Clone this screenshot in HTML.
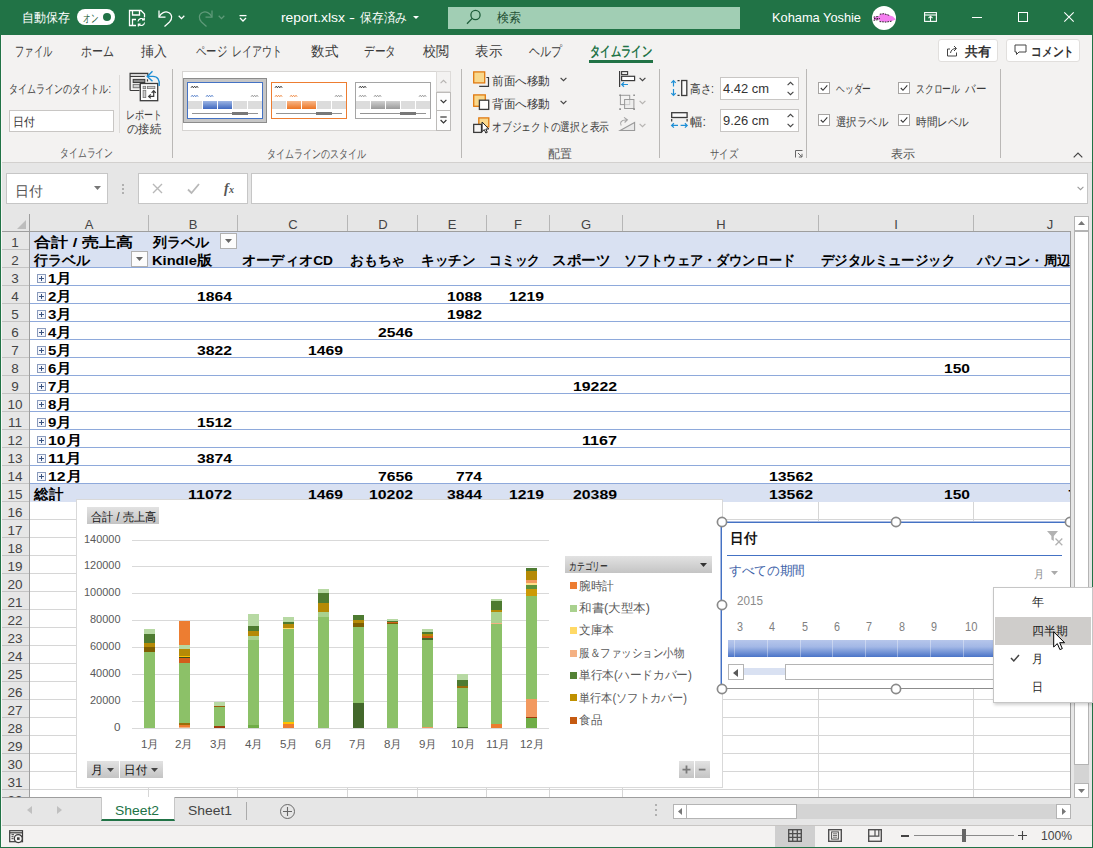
<!DOCTYPE html>
<html lang="ja">
<head>
<meta charset="utf-8">
<title>report.xlsx - Excel</title>
<style>
*{box-sizing:border-box;margin:0;padding:0}
html,body{width:1093px;height:848px;overflow:hidden;background:#e6e6e6}
body{position:relative;font-family:"Liberation Sans",sans-serif;font-size:12px;color:#333}
.a{position:absolute;white-space:nowrap}
svg{position:absolute;overflow:visible}
svg text{font-family:"Liberation Sans",sans-serif;white-space:pre}
#titlebar{left:0;top:0;width:1093px;height:35px;background:#217346}
#tabs{left:0;top:35px;width:1093px;height:31px;background:#f3f2f1}
#ribbon{left:0;top:66px;width:1093px;height:97px;background:#f3f2f1;border-bottom:1px solid #d2d0ce}
#fbar{left:0;top:163px;width:1093px;height:51px;background:#e6e6e6}
#frame-l{left:0;top:0;width:1px;height:848px;background:#217346}
#frame-l2{left:1px;top:35px;width:1px;height:812px;background:#f7f7f6}
#frame-r{left:1092px;top:0;width:1px;height:848px;background:#217346}
#frame-b{left:0;top:847px;width:1093px;height:1px;background:#217346}
</style>
</head>
<body>
<!-- ===== Title bar ===== -->
<div id="titlebar" class="a">
<svg class="tx" style="left:22px;top:7px" width="48" height="21"><text x="0" y="15" font-size="13" fill="#fff" textLength="48" lengthAdjust="spacingAndGlyphs">自動保存</text></svg>
<div class="a" style="left:77px;top:9px;width:38px;height:16px;background:#fff;border-radius:8px"></div>
<svg class="tx" style="left:83px;top:8.5px" width="15" height="18"><text x="0" y="13.0" font-size="11" fill="#1b5e38" textLength="15" lengthAdjust="spacingAndGlyphs">オン</text></svg>
<div class="a" style="left:103px;top:13px;width:8px;height:8px;background:#217346;border-radius:4px"></div>
<svg style="left:128px;top:9px" width="18" height="18" viewBox="0 0 18 18" fill="none" stroke="#fff" stroke-width="1.3"><path d="M8 16.5H1.5V1.5H13L16.5 5V8"/><path d="M4.5 1.5V6H11.5V1.5"/><path d="M4.5 16.5V10.5H8"/><path d="M10 12.5a3.4 3.4 0 0 1 6-1.8M16.3 8.6v2.3h-2.3M16.6 13.5a3.4 3.4 0 0 1-6 1.8M10.3 17.4v-2.3h2.3" stroke-width="1.1"/></svg>
<svg style="left:157px;top:8px" width="18" height="20" viewBox="0 0 18 20" fill="none" stroke="#fff" stroke-width="1.25"><path d="M2 2.5V9H8.5"/><path d="M2.2 8.8C4 5 8 3 11.5 4.5C15.5 6.3 15.5 11 12.5 14L7.5 18.5"/></svg>
<svg style="left:178px;top:15px" width="7" height="5" viewBox="0 0 7 5" fill="none" stroke="#fff" stroke-width="1.3"><path d="M.7.8L3.5 3.6L6.3.8"/></svg>
<svg style="left:196px;top:8px" width="18" height="20" viewBox="0 0 18 20" fill="none" stroke="#5f9a79" stroke-width="1.25"><path d="M16 2.5V9H9.5"/><path d="M15.8 8.8C14 5 10 3 6.5 4.5C2.5 6.3 2.5 11 5.5 14L10.5 18.5"/></svg>
<svg style="left:218px;top:15px" width="7" height="5" viewBox="0 0 7 5" fill="none" stroke="#5f9a79" stroke-width="1.3"><path d="M.7.8L3.5 3.6L6.3.8"/></svg>
<svg style="left:239px;top:13px" width="8" height="9" viewBox="0 0 8 9" fill="none" stroke="#fff" stroke-width="1.3"><path d="M.5 2.6H7.5"/><path d="M1 5L4 8L7 5"/></svg>
<svg class="tx" style="left:281px;top:7px" width="64" height="21"><text x="0" y="15" font-size="13" fill="#fff" textLength="64" lengthAdjust="spacingAndGlyphs">report.xlsx</text></svg>
<svg class="tx" style="left:349px;top:7px" width="6" height="21"><text x="0" y="15" font-size="13" fill="#fff" textLength="6" lengthAdjust="spacingAndGlyphs">-</text></svg>
<svg class="tx" style="left:360px;top:7px" width="47" height="21"><text x="0" y="15" font-size="13" fill="#fff" textLength="47" lengthAdjust="spacingAndGlyphs">保存済み</text></svg>
<svg style="left:413px;top:16px" width="6" height="3" viewBox="0 0 6 3" ><path d="M0 0H6L3 3Z" fill="#fff"/></svg>
<div class="a" style="left:448px;top:7px;width:292px;height:22px;background:#a1ceb4"></div>
<svg style="left:466px;top:9px" width="16" height="16" viewBox="0 0 16 16" fill="none" stroke="#1e5c3a" stroke-width="1.3"><circle cx="9.5" cy="6" r="4.6"/><path d="M6.2 9.4L1 14.8"/></svg>
<svg class="tx" style="left:497px;top:7px" width="24" height="21"><text x="0" y="15" font-size="13" fill="#1e4e33" textLength="24" lengthAdjust="spacingAndGlyphs">検索</text></svg>
<svg class="tx" style="left:772px;top:7px" width="89" height="21"><text x="0" y="15" font-size="13" fill="#fff" textLength="89" lengthAdjust="spacingAndGlyphs">Kohama Yoshie</text></svg>
<div class="a" style="left:872px;top:6px;width:24px;height:24px;background:#fff;border-radius:12px"></div>
<svg style="left:872px;top:6px" width="24" height="24" viewBox="0 0 24 24" ><path d="M1.8 11L7 10.2L8 8L12 7.6L18 9.5L21 10.5L23.8 13.4L20 15L14 16L7.5 15.5L7 13.5L1.8 14.2Z" fill="#f57ff0"/><path d="M1.6 11.1L7 10.3M7.8 8.2L12 7.7L18 9.6M1.6 14.3L7 13.6M7.6 15.6L14 16.1L20 15.1M2 12.6H8" fill="none" stroke="#111" stroke-width=".9" stroke-dasharray="1.6 1"/></svg>
<svg style="left:924px;top:12px" width="13" height="10" viewBox="0 0 13 10" fill="none" stroke="#fff" stroke-width="1.1"><rect x=".6" y=".6" width="11.8" height="8.8"/><path d="M.6 3H12.4"/><path d="M6.5 9.4V4.3M4.5 6.2L6.5 4.2L8.5 6.2"/></svg>
<div class="a" style="left:972px;top:17px;width:10px;height:1px;background:#fff"></div>
<div class="a" style="left:1018px;top:12px;width:10px;height:10px;border:1px solid #fff"></div>
<svg style="left:1064px;top:12px" width="10" height="10" viewBox="0 0 10 10" stroke="#fff" stroke-width="1.1"><path d="M.3.3L9.7 9.7M9.7.3L.3 9.7"/></svg>
</div>
<!-- ===== Tabs ===== -->
<div id="tabs" class="a">
<svg class="tx" style="left:15px;top:5.5px" width="37" height="22"><text x="0" y="15.0" font-size="13.5" fill="#3b3b3b" textLength="37" lengthAdjust="spacingAndGlyphs">ファイル</text></svg>
<svg class="tx" style="left:81px;top:5.5px" width="33" height="22"><text x="0" y="15.0" font-size="13.5" fill="#3b3b3b" textLength="33" lengthAdjust="spacingAndGlyphs">ホーム</text></svg>
<svg class="tx" style="left:141px;top:5.5px" width="26" height="22"><text x="0" y="15.0" font-size="13.5" fill="#3b3b3b" textLength="26" lengthAdjust="spacingAndGlyphs">挿入</text></svg>
<svg class="tx" style="left:196px;top:5.5px" width="31" height="22"><text x="0" y="15.0" font-size="13.5" fill="#3b3b3b" textLength="31" lengthAdjust="spacingAndGlyphs">ページ</text></svg>
<svg class="tx" style="left:232px;top:5.5px" width="50" height="22"><text x="0" y="15.0" font-size="13.5" fill="#3b3b3b" textLength="50" lengthAdjust="spacingAndGlyphs">レイアウト</text></svg>
<svg class="tx" style="left:311px;top:5.5px" width="27" height="22"><text x="0" y="15.0" font-size="13.5" fill="#3b3b3b" textLength="27" lengthAdjust="spacingAndGlyphs">数式</text></svg>
<svg class="tx" style="left:364px;top:5.5px" width="32" height="22"><text x="0" y="15.0" font-size="13.5" fill="#3b3b3b" textLength="32" lengthAdjust="spacingAndGlyphs">データ</text></svg>
<svg class="tx" style="left:423px;top:5.5px" width="26" height="22"><text x="0" y="15.0" font-size="13.5" fill="#3b3b3b" textLength="26" lengthAdjust="spacingAndGlyphs">校閲</text></svg>
<svg class="tx" style="left:475px;top:5.5px" width="27" height="22"><text x="0" y="15.0" font-size="13.5" fill="#3b3b3b" textLength="27" lengthAdjust="spacingAndGlyphs">表示</text></svg>
<svg class="tx" style="left:529px;top:5.5px" width="33" height="22"><text x="0" y="15.0" font-size="13.5" fill="#3b3b3b" textLength="33" lengthAdjust="spacingAndGlyphs">ヘルプ</text></svg>
<svg class="tx" style="left:590px;top:5.5px" width="62" height="22"><text x="0" y="15.0" font-size="13.5" fill="#217346" font-weight="bold" textLength="62" lengthAdjust="spacingAndGlyphs">タイムライン</text></svg>
<div class="a" style="left:589px;top:25px;width:64px;height:3px;background:#217346"></div>
<div class="a" style="left:938px;top:4px;width:60px;height:23px;background:#fff;border:1px solid #e1dfdd;border-radius:3px"></div>
<svg style="left:946px;top:9px" width="13" height="13" viewBox="0 0 13 13" fill="none" stroke="#444" stroke-width="1"><path d="M4 5H1.5V12H10.5V8.5"/><path d="M4.5 9C5 6 7 4.5 10 4.5M8 2L10.5 4.5L8 7"/></svg>
<svg class="tx" style="left:965px;top:5.5px" width="26" height="21"><text x="0" y="15.0" font-size="13" fill="#333" font-weight="bold" textLength="26" lengthAdjust="spacingAndGlyphs">共有</text></svg>
<div class="a" style="left:1006px;top:4px;width:74px;height:23px;background:#fff;border:1px solid #e1dfdd;border-radius:3px"></div>
<svg style="left:1014px;top:9px" width="13" height="12" viewBox="0 0 13 12" fill="none" stroke="#444" stroke-width="1"><path d="M1 1H12V8H5L2.5 10.5V8H1Z"/></svg>
<svg class="tx" style="left:1031px;top:5.5px" width="43" height="21"><text x="0" y="15.0" font-size="13" fill="#333" font-weight="bold" textLength="43" lengthAdjust="spacingAndGlyphs">コメント</text></svg>
</div>
<!-- ===== Ribbon ===== -->
<div id="ribbon" class="a">
<svg class="tx" style="left:9px;top:13px" width="102" height="20"><text x="0" y="14" font-size="12" fill="#3b3b3b" textLength="102" lengthAdjust="spacingAndGlyphs">タイムラインのタイトル:</text></svg>
<div class="a" style="left:9px;top:44px;width:105px;height:22px;background:#fff;border:1px solid #c8c6c4"></div>
<svg class="tx" style="left:13px;top:46px" width="22" height="20"><text x="0" y="14" font-size="12" fill="#333" textLength="22" lengthAdjust="spacingAndGlyphs">日付</text></svg>
<div class="a" style="left:119px;top:9px;width:1px;height:58px;background:#dcdad8"></div>
<svg style="left:129px;top:4px" width="32" height="32" viewBox="0 0 32 32" ><rect x="1.7" y="3.9" width="16.5" height="2.2" fill="#d6d6d6"/><path d="M1.1 20.5V3.3H18.8V6M18.5 9.2V11.6M1.1 20.5H10.5M1.1 6.5H15.8" fill="none" stroke="#3b3b3b" stroke-width="1.2"/><rect x="4.2" y="9.4" width="11.6" height="3.1" fill="#8c8c8c" stroke="#3b3b3b"/><rect x="4.2" y="14.4" width="6.5" height="3.3" fill="#d0d0d0" stroke="#777"/><rect x="11.3" y="13.5" width="17.4" height="17.2" fill="#fff" stroke="#3b3b3b" stroke-width="1.3"/><rect x="14.1" y="16.3" width="2.6" height="2.3" fill="#ccc" stroke="#777" stroke-width=".8"/><rect x="18.4" y="16.3" width="7.5" height="2.3" fill="#ccc" stroke="#777" stroke-width=".8"/><rect x="14.1" y="20.3" width="2.7" height="7.3" fill="#ccc" stroke="#777" stroke-width=".8"/><path d="M19.8 26.4H24.7V20.8M21.8 24.4L19.6 26.4L21.8 28.4M22.6 22.8L24.7 20.6L26.8 22.8" fill="none" stroke="#3b3b3b" stroke-width="1.2"/><path d="M23.5 1.2L18.3 6.4L23.5 11.3M18.5 6.4H24C28.5 6.4 31 10 30.2 16" fill="none" stroke="#1e8fd6" stroke-width="1.4"/></svg>
<svg class="tx" style="left:126px;top:39px" width="36" height="20"><text x="0" y="14" font-size="12" fill="#3b3b3b" textLength="36" lengthAdjust="spacingAndGlyphs">レポート</text></svg>
<svg class="tx" style="left:127px;top:53px" width="34" height="20"><text x="0" y="14" font-size="12" fill="#3b3b3b" textLength="34" lengthAdjust="spacingAndGlyphs">の接続</text></svg>
<svg class="tx" style="left:60px;top:77px" width="53" height="20"><text x="0" y="14" font-size="12" fill="#555" textLength="53" lengthAdjust="spacingAndGlyphs">タイムライン</text></svg>
<div class="a" style="left:172px;top:3px;width:1px;height:89px;background:#bab8b6"></div>
<div class="a" style="left:182px;top:5px;width:269px;height:60px;background:#fff;border:1px solid #d6d4d2"></div>
<div class="a" style="left:183px;top:12px;width:84px;height:45px;background:#c6c6c6;border:1px solid #8c8c8c"></div><div class="a" style="left:187px;top:16px;width:76px;height:37px;background:#fff;border:1px solid #4472c4"></div><svg style="left:187px;top:16px" width="76" height="37" viewBox="0 0 76 37" ><path d="M0 1.8L1.2 .2L2.4 1.8L3.6 .2L4.8 1.8L6 .2L7.2 1.8" transform="translate(4,4)" stroke="#111" fill="none" stroke-width=".8"/><path d="M0 1.8L1.2 .2L2.4 1.8L3.6 .2L4.8 1.8L6 .2L7.2 1.8" transform="translate(4,13)" stroke="#4472c4" fill="none" stroke-width=".8"/><path d="M0 1.8L1.2 .2L2.4 1.8L3.6 .2L4.8 1.8L6 .2L7.2 1.8" transform="translate(19,13)" stroke="#4472c4" fill="none" stroke-width=".8"/><path d="M0 1.8L1.2 .2L2.4 1.8L3.6 .2L4.8 1.8L6 .2L7.2 1.8" transform="translate(64,13)" stroke="#888" fill="none" stroke-width=".8"/><defs><linearGradient id="g187" x1="0" y1="0" x2="0" y2="1"><stop offset="0" stop-color="#9db5e3"/><stop offset="1" stop-color="#3f68bf"/></linearGradient></defs><rect x="1" y="19" width="14" height="8" fill="#dcdcdc"/><rect x="16" y="19" width="14" height="8" fill="url(#g187)"/><rect x="31" y="19" width="14" height="8" fill="url(#g187)"/><rect x="46" y="19" width="14" height="8" fill="#dcdcdc"/><rect x="61" y="19" width="14" height="8" fill="#dcdcdc"/><path d="M5 31.5H71" stroke="#777" stroke-width=".8"/><rect x="45" y="30" width="16" height="3" fill="#777"/></svg>
<div class="a" style="left:271px;top:16px;width:76px;height:37px;background:#fff;border:1px solid #ed7d31"></div><svg style="left:271px;top:16px" width="76" height="37" viewBox="0 0 76 37" ><path d="M0 1.8L1.2 .2L2.4 1.8L3.6 .2L4.8 1.8L6 .2L7.2 1.8" transform="translate(4,4)" stroke="#111" fill="none" stroke-width=".8"/><path d="M0 1.8L1.2 .2L2.4 1.8L3.6 .2L4.8 1.8L6 .2L7.2 1.8" transform="translate(4,13)" stroke="#ed7d31" fill="none" stroke-width=".8"/><path d="M0 1.8L1.2 .2L2.4 1.8L3.6 .2L4.8 1.8L6 .2L7.2 1.8" transform="translate(19,13)" stroke="#ed7d31" fill="none" stroke-width=".8"/><path d="M0 1.8L1.2 .2L2.4 1.8L3.6 .2L4.8 1.8L6 .2L7.2 1.8" transform="translate(64,13)" stroke="#888" fill="none" stroke-width=".8"/><defs><linearGradient id="g271" x1="0" y1="0" x2="0" y2="1"><stop offset="0" stop-color="#f7b78a"/><stop offset="1" stop-color="#ec7524"/></linearGradient></defs><rect x="1" y="19" width="14" height="8" fill="#dcdcdc"/><rect x="16" y="19" width="14" height="8" fill="url(#g271)"/><rect x="31" y="19" width="14" height="8" fill="url(#g271)"/><rect x="46" y="19" width="14" height="8" fill="#dcdcdc"/><rect x="61" y="19" width="14" height="8" fill="#dcdcdc"/><path d="M5 31.5H71" stroke="#777" stroke-width=".8"/><rect x="45" y="30" width="16" height="3" fill="#777"/></svg>
<div class="a" style="left:355px;top:16px;width:76px;height:37px;background:#fff;border:1px solid #a5a5a5"></div><svg style="left:355px;top:16px" width="76" height="37" viewBox="0 0 76 37" ><path d="M0 1.8L1.2 .2L2.4 1.8L3.6 .2L4.8 1.8L6 .2L7.2 1.8" transform="translate(4,4)" stroke="#111" fill="none" stroke-width=".8"/><path d="M0 1.8L1.2 .2L2.4 1.8L3.6 .2L4.8 1.8L6 .2L7.2 1.8" transform="translate(4,13)" stroke="#888" fill="none" stroke-width=".8"/><path d="M0 1.8L1.2 .2L2.4 1.8L3.6 .2L4.8 1.8L6 .2L7.2 1.8" transform="translate(19,13)" stroke="#888" fill="none" stroke-width=".8"/><path d="M0 1.8L1.2 .2L2.4 1.8L3.6 .2L4.8 1.8L6 .2L7.2 1.8" transform="translate(64,13)" stroke="#888" fill="none" stroke-width=".8"/><defs><linearGradient id="g355" x1="0" y1="0" x2="0" y2="1"><stop offset="0" stop-color="#d0d0d0"/><stop offset="1" stop-color="#9a9a9a"/></linearGradient></defs><rect x="1" y="19" width="14" height="8" fill="#dcdcdc"/><rect x="16" y="19" width="14" height="8" fill="url(#g355)"/><rect x="31" y="19" width="14" height="8" fill="url(#g355)"/><rect x="46" y="19" width="14" height="8" fill="#dcdcdc"/><rect x="61" y="19" width="14" height="8" fill="#dcdcdc"/><path d="M5 31.5H71" stroke="#777" stroke-width=".8"/><rect x="45" y="30" width="16" height="3" fill="#777"/></svg>
<div class="a" style="left:436px;top:5px;width:15px;height:21px;background:#f3f2f1;border:1px solid #dddbd9"></div>
<svg style="left:440px;top:13px" width="7" height="5" viewBox="0 0 7 5" fill="none" stroke="#b5b3b1" stroke-width="1.1"><path d="M.6 4.2L3.5 1.3L6.4 4.2"/></svg>
<div class="a" style="left:436px;top:26px;width:15px;height:19px;background:#fdfdfd;border:1px solid #bdbbb9"></div>
<svg style="left:440px;top:33px" width="7" height="5" viewBox="0 0 7 5" fill="none" stroke="#333" stroke-width="1.2"><path d="M.6.8L3.5 3.7L6.4.8"/></svg>
<div class="a" style="left:436px;top:44px;width:15px;height:21px;background:#fdfdfd;border:1px solid #bdbbb9"></div>
<svg style="left:440px;top:50px" width="7" height="9" viewBox="0 0 7 9" fill="none" stroke="#333" stroke-width="1.2"><path d="M.3 1H6.7"/><path d="M.6 4L3.5 6.9L6.4 4"/></svg>
<svg class="tx" style="left:267px;top:78px" width="99" height="20"><text x="0" y="14" font-size="12" fill="#555" textLength="99" lengthAdjust="spacingAndGlyphs">タイムラインのスタイル</text></svg>
<div class="a" style="left:461px;top:3px;width:1px;height:89px;background:#bab8b6"></div>
<svg style="left:473px;top:5px" width="17" height="17" viewBox="0 0 17 17" ><rect x=".7" y=".9" width="11" height="11" fill="#f9d88c" stroke="#e07a10" stroke-width="1.3"/><path d="M6.2 15.4H15.5V6.5H13.4" fill="none" stroke="#3b3b3b" stroke-width="1.2"/></svg>
<svg class="tx" style="left:492px;top:5px" width="58" height="20"><text x="0" y="14" font-size="12" fill="#3b3b3b" textLength="58" lengthAdjust="spacingAndGlyphs">前面へ移動</text></svg>
<svg style="left:560px;top:11px" width="7" height="5" viewBox="0 0 7 5" fill="none" stroke="#444" stroke-width="1.2"><path d="M.6.8L3.5 3.7L6.4.8"/></svg>
<svg style="left:473px;top:28px" width="17" height="17" viewBox="0 0 17 17" ><rect x=".7" y=".9" width="11.6" height="11.4" fill="#f9d88c" stroke="#e07a10" stroke-width="1.3"/><rect x="6.4" y="6.2" width="9.3" height="9.2" fill="#fff" stroke="#3b3b3b" stroke-width="1.3"/></svg>
<svg class="tx" style="left:492px;top:28px" width="58" height="20"><text x="0" y="14" font-size="12" fill="#3b3b3b" textLength="58" lengthAdjust="spacingAndGlyphs">背面へ移動</text></svg>
<svg style="left:560px;top:34px" width="7" height="5" viewBox="0 0 7 5" fill="none" stroke="#444" stroke-width="1.2"><path d="M.6.8L3.5 3.7L6.4.8"/></svg>
<svg style="left:473px;top:51px" width="18" height="17" viewBox="0 0 18 17" ><rect x="5.8" y=".9" width="10" height="9" fill="#f9d88c" stroke="#e07a10" stroke-width="1.3"/><rect x=".7" y="7.4" width="7.8" height="8" fill="#f6f5f4" stroke="#3b3b3b" stroke-width="1.3"/><path d="M9.1 5V14.6L11.3 12.6L12.8 16L14.3 15.3L12.8 12H15.8Z" fill="#fff" stroke="#222" stroke-width="1"/></svg>
<svg class="tx" style="left:492px;top:51px" width="117" height="20"><text x="0" y="14" font-size="12" fill="#3b3b3b" textLength="117" lengthAdjust="spacingAndGlyphs">オブジェクトの選択と表示</text></svg>
<svg style="left:619px;top:5px" width="17" height="17" viewBox="0 0 17 17" ><path d="M.6 0V16" stroke="#3b3b3b" stroke-width="1.2"/><rect x="2.6" y=".6" width="6" height="3" fill="none" stroke="#3b3b3b" stroke-width="1.1"/><rect x="2.6" y="5.3" width="13" height="4.3" fill="#fff" stroke="#3b3b3b" stroke-width="1.2"/><path d="M9 13.5H2.8M5 11.3L2.7 13.5L5 15.7" fill="none" stroke="#1e8fd6" stroke-width="1.2"/></svg>
<svg style="left:639px;top:11px" width="7" height="5" viewBox="0 0 7 5" fill="none" stroke="#444" stroke-width="1.2"><path d="M.6.8L3.5 3.7L6.4.8"/></svg>
<svg style="left:619px;top:28px" width="16" height="16" viewBox="0 0 16 16" ><rect x="1.4" y="1.3" width="9.3" height="9.3" fill="none" stroke="#9a9a9a"/><rect x="5.6" y="5.5" width="9.3" height="9" fill="#ebebeb" fill-opacity=".6" stroke="#9a9a9a"/><path d="M.3 .4h1.6v1.6h-1.6zM14.3 .4h1.6v1.6h-1.6zM.3 14.3h1.6v1.6h-1.6zM14.3 14.3h1.6v1.6h-1.6z" fill="#8a8a8a"/></svg>
<svg style="left:639px;top:34px" width="7" height="5" viewBox="0 0 7 5" fill="none" stroke="#b5b3b1" stroke-width="1.2"><path d="M.6.8L3.5 3.7L6.4.8"/></svg>
<svg style="left:619px;top:50px" width="17" height="16" viewBox="0 0 17 16" ><path d="M1.2 14.5H15.6V6.5Z" fill="#e9e9e9" stroke="#9a9a9a" stroke-width="1.1"/><path d="M2.2 9.5C.5 7 2 3.6 7.6 4M5 1.4L8.4 3.9L5.6 6.5" fill="none" stroke="#a4a4a4" stroke-width="1.1"/></svg>
<svg style="left:639px;top:57px" width="7" height="5" viewBox="0 0 7 5" fill="none" stroke="#b5b3b1" stroke-width="1.2"><path d="M.6.8L3.5 3.7L6.4.8"/></svg>
<svg class="tx" style="left:548px;top:78px" width="24" height="20"><text x="0" y="14" font-size="12" fill="#555" textLength="24" lengthAdjust="spacingAndGlyphs">配置</text></svg>
<div class="a" style="left:659px;top:3px;width:1px;height:89px;background:#bab8b6"></div>
<svg style="left:671px;top:13px" width="17" height="18" viewBox="0 0 17 18" ><path d="M2.5 1.6V7.5M2.5 10V16.5M.3 3.9L2.5 1.6L4.7 3.9M.3 14.2L2.5 16.5L4.7 14.2" fill="none" stroke="#1e8fd6" stroke-width="1.2"/><path d="M6.5 1.6H8.6M6.5 16.4H8.6" stroke="#3b3b3b" stroke-width="1.2"/><rect x="10.7" y="1.5" width="5.1" height="15" fill="#fafafa" stroke="#3b3b3b" stroke-width="1.3"/></svg>
<svg class="tx" style="left:690px;top:13px" width="24" height="20"><text x="0" y="14" font-size="12" fill="#3b3b3b" textLength="24" lengthAdjust="spacingAndGlyphs">高さ:</text></svg>
<div class="a" style="left:720px;top:11px;width:79px;height:23px;background:#fff;border:1px solid #c8c6c4"></div>
<svg class="tx" style="left:723px;top:12px" width="46" height="21"><text x="0" y="15" font-size="13" fill="#333" textLength="46" lengthAdjust="spacingAndGlyphs">4.42 cm</text></svg>
<svg style="left:787px;top:15px" width="7" height="5" viewBox="0 0 7 5" fill="none" stroke="#444" stroke-width="1.1"><path d="M.6 4.2L3.5 1.3L6.4 4.2"/></svg>
<svg style="left:787px;top:25px" width="7" height="5" viewBox="0 0 7 5" fill="none" stroke="#444" stroke-width="1.1"><path d="M.6.8L3.5 3.7L6.4.8"/></svg>
<svg style="left:671px;top:46px" width="18" height="17" viewBox="0 0 18 17" ><rect x=".7" y=".7" width="15.4" height="4.8" fill="#fafafa" stroke="#3b3b3b" stroke-width="1.3"/><path d="M.7 7V9.6M16.1 7V9.6" stroke="#3b3b3b" stroke-width="1.2"/><path d="M.8 13.4H7M9.6 13.4H16M2.9 11.2L.6 13.4L2.9 15.6M13.9 11.2L16.2 13.4L13.9 15.6" fill="none" stroke="#1e8fd6" stroke-width="1.2"/></svg>
<svg class="tx" style="left:690px;top:46px" width="16" height="20"><text x="0" y="14" font-size="12" fill="#3b3b3b" textLength="16" lengthAdjust="spacingAndGlyphs">幅:</text></svg>
<div class="a" style="left:720px;top:43px;width:79px;height:23px;background:#fff;border:1px solid #c8c6c4"></div>
<svg class="tx" style="left:723px;top:44px" width="46" height="21"><text x="0" y="15" font-size="13" fill="#333" textLength="46" lengthAdjust="spacingAndGlyphs">9.26 cm</text></svg>
<svg style="left:787px;top:47px" width="7" height="5" viewBox="0 0 7 5" fill="none" stroke="#444" stroke-width="1.1"><path d="M.6 4.2L3.5 1.3L6.4 4.2"/></svg>
<svg style="left:787px;top:57px" width="7" height="5" viewBox="0 0 7 5" fill="none" stroke="#444" stroke-width="1.1"><path d="M.6.8L3.5 3.7L6.4.8"/></svg>
<svg class="tx" style="left:710px;top:78px" width="28" height="20"><text x="0" y="14" font-size="12" fill="#555" textLength="28" lengthAdjust="spacingAndGlyphs">サイズ</text></svg>
<svg style="left:795px;top:84px" width="8" height="8" viewBox="0 0 8 8" fill="none" stroke="#666" stroke-width="1"><path d="M.5 7.5V.5H7.5"/><path d="M3 3L7 7M7 3.8V7H3.8"/></svg>
<div class="a" style="left:806px;top:3px;width:1px;height:89px;background:#bab8b6"></div>
<div class="a" style="left:818px;top:16px;width:12px;height:12px;background:#fff;border:1px solid #a6a4a2"></div><svg style="left:818px;top:16px" width="12" height="12" viewBox="0 0 12 12" fill="none" stroke="#333" stroke-width="1.1"><path d="M2.8 6L5 8.3L9.3 3.4"/></svg>
<svg class="tx" style="left:836px;top:13px" width="35" height="20"><text x="0" y="14" font-size="12" fill="#3b3b3b" textLength="35" lengthAdjust="spacingAndGlyphs">ヘッダー</text></svg>
<div class="a" style="left:898px;top:16px;width:12px;height:12px;background:#fff;border:1px solid #a6a4a2"></div><svg style="left:898px;top:16px" width="12" height="12" viewBox="0 0 12 12" fill="none" stroke="#333" stroke-width="1.1"><path d="M2.8 6L5 8.3L9.3 3.4"/></svg>
<svg class="tx" style="left:916px;top:13px" width="44" height="20"><text x="0" y="14" font-size="12" fill="#3b3b3b" textLength="44" lengthAdjust="spacingAndGlyphs">スクロール</text></svg>
<svg class="tx" style="left:965px;top:13px" width="21" height="20"><text x="0" y="14" font-size="12" fill="#3b3b3b" textLength="21" lengthAdjust="spacingAndGlyphs">バー</text></svg>
<div class="a" style="left:818px;top:48px;width:12px;height:12px;background:#fff;border:1px solid #a6a4a2"></div><svg style="left:818px;top:48px" width="12" height="12" viewBox="0 0 12 12" fill="none" stroke="#333" stroke-width="1.1"><path d="M2.8 6L5 8.3L9.3 3.4"/></svg>
<svg class="tx" style="left:836px;top:46px" width="52" height="20"><text x="0" y="14" font-size="12" fill="#3b3b3b" textLength="52" lengthAdjust="spacingAndGlyphs">選択ラベル</text></svg>
<div class="a" style="left:898px;top:48px;width:12px;height:12px;background:#fff;border:1px solid #a6a4a2"></div><svg style="left:898px;top:48px" width="12" height="12" viewBox="0 0 12 12" fill="none" stroke="#333" stroke-width="1.1"><path d="M2.8 6L5 8.3L9.3 3.4"/></svg>
<svg class="tx" style="left:916px;top:46px" width="53" height="20"><text x="0" y="14" font-size="12" fill="#3b3b3b" textLength="53" lengthAdjust="spacingAndGlyphs">時間レベル</text></svg>
<svg class="tx" style="left:891px;top:78px" width="24" height="20"><text x="0" y="14" font-size="12" fill="#555" textLength="24" lengthAdjust="spacingAndGlyphs">表示</text></svg>
<div class="a" style="left:1000px;top:3px;width:1px;height:89px;background:#bab8b6"></div>
<svg style="left:1073px;top:86px" width="10" height="6" viewBox="0 0 10 6" fill="none" stroke="#444" stroke-width="1.2"><path d="M.7 5.3L5 1L9.3 5.3"/></svg>
</div>
<!-- ===== Formula bar ===== -->
<div id="fbar" class="a">
<div class="a" style="left:6px;top:10px;width:102px;height:31px;background:#fff;border:1px solid #c6c6c6"></div>
<svg class="tx" style="left:15px;top:17px" width="28" height="23"><text x="0" y="16" font-size="14" fill="#555" textLength="28" lengthAdjust="spacingAndGlyphs">日付</text></svg>
<svg style="left:94px;top:23px" width="7" height="4" viewBox="0 0 7 4" ><path d="M0 0H7L3.5 4Z" fill="#777"/></svg>
<div class="a" style="left:122px;top:21px;width:2px;height:2px;background:#b0b0b0"></div>
<div class="a" style="left:122px;top:25px;width:2px;height:2px;background:#b0b0b0"></div>
<div class="a" style="left:122px;top:29px;width:2px;height:2px;background:#b0b0b0"></div>
<div class="a" style="left:138px;top:10px;width:110px;height:31px;background:#fff;border:1px solid #c6c6c6"></div>
<svg style="left:152px;top:20px" width="11" height="11" viewBox="0 0 11 11" stroke="#b8b8b8" stroke-width="1.4" fill="none"><path d="M1 1L10 10M10 1L1 10"/></svg>
<svg style="left:187px;top:20px" width="13" height="11" viewBox="0 0 13 11" stroke="#b8b8b8" stroke-width="1.8" fill="none"><path d="M1 6.5L4.5 10L12 1"/></svg>
<svg class="tx" style="left:223px;top:15px" width="16" height="20"><text x="1" y="15" font-size="14" fill="#555" font-style="italic" font-weight="bold" style="font-family:'Liberation Serif',serif">f</text><text x="6" y="15" font-size="10" fill="#555" font-style="italic" font-weight="bold" style="font-family:'Liberation Serif',serif">x</text></svg>
<div class="a" style="left:251px;top:10px;width:837px;height:31px;background:#fff;border:1px solid #c6c6c6"></div>
<svg style="left:1077px;top:23px" width="7" height="5" viewBox="0 0 7 5" fill="none" stroke="#999" stroke-width="1.1"><path d="M.6.8L3.5 3.7L6.4.8"/></svg>
</div>
<!-- ===== Grid ===== -->
<div id="grid" class="a" style="left:0;top:214px;width:1093px;height:584px;background:#e6e6e6;overflow:hidden">
<div class="a" style="left:30px;top:18px;width:1041px;height:565px;background:#fff"></div>
<svg style="left:17px;top:6px" width="9" height="9" viewBox="0 0 9 9" ><path d="M9 0V9H0Z" fill="#bdbdbd"/></svg>
<div class="a" style="left:2px;top:17px;width:1069px;height:1px;background:#9e9e9e"></div>
<div class="a" style="left:29px;top:0px;width:1px;height:584px;background:#9e9e9e"></div>
<svg class="tx" style="left:89.0px;top:0px" width="200" height="21"><text x="0" y="15" font-size="13" fill="#444" text-anchor="middle">A</text></svg>
<div class="a" style="left:148px;top:1px;width:1px;height:16px;background:#b6b6b6"></div>
<svg class="tx" style="left:193.0px;top:0px" width="200" height="21"><text x="0" y="15" font-size="13" fill="#444" text-anchor="middle">B</text></svg>
<div class="a" style="left:237px;top:1px;width:1px;height:16px;background:#b6b6b6"></div>
<svg class="tx" style="left:292.5px;top:0px" width="200" height="21"><text x="0" y="15" font-size="13" fill="#444" text-anchor="middle">C</text></svg>
<div class="a" style="left:347px;top:1px;width:1px;height:16px;background:#b6b6b6"></div>
<svg class="tx" style="left:382.5px;top:0px" width="200" height="21"><text x="0" y="15" font-size="13" fill="#444" text-anchor="middle">D</text></svg>
<div class="a" style="left:417px;top:1px;width:1px;height:16px;background:#b6b6b6"></div>
<svg class="tx" style="left:452.0px;top:0px" width="200" height="21"><text x="0" y="15" font-size="13" fill="#444" text-anchor="middle">E</text></svg>
<div class="a" style="left:486px;top:1px;width:1px;height:16px;background:#b6b6b6"></div>
<svg class="tx" style="left:518.0px;top:0px" width="200" height="21"><text x="0" y="15" font-size="13" fill="#444" text-anchor="middle">F</text></svg>
<div class="a" style="left:549px;top:1px;width:1px;height:16px;background:#b6b6b6"></div>
<svg class="tx" style="left:586.0px;top:0px" width="200" height="21"><text x="0" y="15" font-size="13" fill="#444" text-anchor="middle">G</text></svg>
<div class="a" style="left:622px;top:1px;width:1px;height:16px;background:#b6b6b6"></div>
<svg class="tx" style="left:720.5px;top:0px" width="200" height="21"><text x="0" y="15" font-size="13" fill="#444" text-anchor="middle">H</text></svg>
<div class="a" style="left:818px;top:1px;width:1px;height:16px;background:#b6b6b6"></div>
<svg class="tx" style="left:896.0px;top:0px" width="200" height="21"><text x="0" y="15" font-size="13" fill="#444" text-anchor="middle">I</text></svg>
<div class="a" style="left:973px;top:1px;width:1px;height:16px;background:#b6b6b6"></div>
<svg class="tx" style="left:1050px;top:0px" width="200" height="21"><text x="0" y="15" font-size="13" fill="#444" text-anchor="middle">J</text></svg>
<svg class="tx" style="left:14.5px;top:18px" width="200" height="22"><text x="0" y="15" font-size="13.5" fill="#444" text-anchor="middle">1</text></svg>
<div class="a" style="left:2px;top:35px;width:27px;height:1px;background:#c4c4c4"></div>
<svg class="tx" style="left:14.5px;top:36px" width="200" height="22"><text x="0" y="15" font-size="13.5" fill="#444" text-anchor="middle">2</text></svg>
<div class="a" style="left:2px;top:53px;width:27px;height:1px;background:#c4c4c4"></div>
<svg class="tx" style="left:14.5px;top:54px" width="200" height="22"><text x="0" y="15" font-size="13.5" fill="#444" text-anchor="middle">3</text></svg>
<div class="a" style="left:2px;top:71px;width:27px;height:1px;background:#c4c4c4"></div>
<svg class="tx" style="left:14.5px;top:72px" width="200" height="22"><text x="0" y="15" font-size="13.5" fill="#444" text-anchor="middle">4</text></svg>
<div class="a" style="left:2px;top:89px;width:27px;height:1px;background:#c4c4c4"></div>
<svg class="tx" style="left:14.5px;top:90px" width="200" height="22"><text x="0" y="15" font-size="13.5" fill="#444" text-anchor="middle">5</text></svg>
<div class="a" style="left:2px;top:107px;width:27px;height:1px;background:#c4c4c4"></div>
<svg class="tx" style="left:14.5px;top:108px" width="200" height="22"><text x="0" y="15" font-size="13.5" fill="#444" text-anchor="middle">6</text></svg>
<div class="a" style="left:2px;top:125px;width:27px;height:1px;background:#c4c4c4"></div>
<svg class="tx" style="left:14.5px;top:126px" width="200" height="22"><text x="0" y="15" font-size="13.5" fill="#444" text-anchor="middle">7</text></svg>
<div class="a" style="left:2px;top:143px;width:27px;height:1px;background:#c4c4c4"></div>
<svg class="tx" style="left:14.5px;top:144px" width="200" height="22"><text x="0" y="15" font-size="13.5" fill="#444" text-anchor="middle">8</text></svg>
<div class="a" style="left:2px;top:161px;width:27px;height:1px;background:#c4c4c4"></div>
<svg class="tx" style="left:14.5px;top:162px" width="200" height="22"><text x="0" y="15" font-size="13.5" fill="#444" text-anchor="middle">9</text></svg>
<div class="a" style="left:2px;top:179px;width:27px;height:1px;background:#c4c4c4"></div>
<svg class="tx" style="left:14.5px;top:180px" width="200" height="22"><text x="0" y="15" font-size="13.5" fill="#444" text-anchor="middle">10</text></svg>
<div class="a" style="left:2px;top:197px;width:27px;height:1px;background:#c4c4c4"></div>
<svg class="tx" style="left:14.5px;top:198px" width="200" height="22"><text x="0" y="15" font-size="13.5" fill="#444" text-anchor="middle">11</text></svg>
<div class="a" style="left:2px;top:215px;width:27px;height:1px;background:#c4c4c4"></div>
<svg class="tx" style="left:14.5px;top:216px" width="200" height="22"><text x="0" y="15" font-size="13.5" fill="#444" text-anchor="middle">12</text></svg>
<div class="a" style="left:2px;top:233px;width:27px;height:1px;background:#c4c4c4"></div>
<svg class="tx" style="left:14.5px;top:234px" width="200" height="22"><text x="0" y="15" font-size="13.5" fill="#444" text-anchor="middle">13</text></svg>
<div class="a" style="left:2px;top:251px;width:27px;height:1px;background:#c4c4c4"></div>
<svg class="tx" style="left:14.5px;top:252px" width="200" height="22"><text x="0" y="15" font-size="13.5" fill="#444" text-anchor="middle">14</text></svg>
<div class="a" style="left:2px;top:269px;width:27px;height:1px;background:#c4c4c4"></div>
<svg class="tx" style="left:14.5px;top:270px" width="200" height="22"><text x="0" y="15" font-size="13.5" fill="#444" text-anchor="middle">15</text></svg>
<div class="a" style="left:2px;top:287px;width:27px;height:1px;background:#c4c4c4"></div>
<svg class="tx" style="left:14.5px;top:288px" width="200" height="22"><text x="0" y="15" font-size="13.5" fill="#444" text-anchor="middle">16</text></svg>
<div class="a" style="left:2px;top:305px;width:27px;height:1px;background:#c4c4c4"></div>
<svg class="tx" style="left:14.5px;top:306px" width="200" height="22"><text x="0" y="15" font-size="13.5" fill="#444" text-anchor="middle">17</text></svg>
<div class="a" style="left:2px;top:323px;width:27px;height:1px;background:#c4c4c4"></div>
<svg class="tx" style="left:14.5px;top:324px" width="200" height="22"><text x="0" y="15" font-size="13.5" fill="#444" text-anchor="middle">18</text></svg>
<div class="a" style="left:2px;top:341px;width:27px;height:1px;background:#c4c4c4"></div>
<svg class="tx" style="left:14.5px;top:342px" width="200" height="22"><text x="0" y="15" font-size="13.5" fill="#444" text-anchor="middle">19</text></svg>
<div class="a" style="left:2px;top:359px;width:27px;height:1px;background:#c4c4c4"></div>
<svg class="tx" style="left:14.5px;top:360px" width="200" height="22"><text x="0" y="15" font-size="13.5" fill="#444" text-anchor="middle">20</text></svg>
<div class="a" style="left:2px;top:377px;width:27px;height:1px;background:#c4c4c4"></div>
<svg class="tx" style="left:14.5px;top:378px" width="200" height="22"><text x="0" y="15" font-size="13.5" fill="#444" text-anchor="middle">21</text></svg>
<div class="a" style="left:2px;top:395px;width:27px;height:1px;background:#c4c4c4"></div>
<svg class="tx" style="left:14.5px;top:396px" width="200" height="22"><text x="0" y="15" font-size="13.5" fill="#444" text-anchor="middle">22</text></svg>
<div class="a" style="left:2px;top:413px;width:27px;height:1px;background:#c4c4c4"></div>
<svg class="tx" style="left:14.5px;top:414px" width="200" height="22"><text x="0" y="15" font-size="13.5" fill="#444" text-anchor="middle">23</text></svg>
<div class="a" style="left:2px;top:431px;width:27px;height:1px;background:#c4c4c4"></div>
<svg class="tx" style="left:14.5px;top:432px" width="200" height="22"><text x="0" y="15" font-size="13.5" fill="#444" text-anchor="middle">24</text></svg>
<div class="a" style="left:2px;top:449px;width:27px;height:1px;background:#c4c4c4"></div>
<svg class="tx" style="left:14.5px;top:450px" width="200" height="22"><text x="0" y="15" font-size="13.5" fill="#444" text-anchor="middle">25</text></svg>
<div class="a" style="left:2px;top:467px;width:27px;height:1px;background:#c4c4c4"></div>
<svg class="tx" style="left:14.5px;top:468px" width="200" height="22"><text x="0" y="15" font-size="13.5" fill="#444" text-anchor="middle">26</text></svg>
<div class="a" style="left:2px;top:485px;width:27px;height:1px;background:#c4c4c4"></div>
<svg class="tx" style="left:14.5px;top:486px" width="200" height="22"><text x="0" y="15" font-size="13.5" fill="#444" text-anchor="middle">27</text></svg>
<div class="a" style="left:2px;top:503px;width:27px;height:1px;background:#c4c4c4"></div>
<svg class="tx" style="left:14.5px;top:504px" width="200" height="22"><text x="0" y="15" font-size="13.5" fill="#444" text-anchor="middle">28</text></svg>
<div class="a" style="left:2px;top:521px;width:27px;height:1px;background:#c4c4c4"></div>
<svg class="tx" style="left:14.5px;top:522px" width="200" height="22"><text x="0" y="15" font-size="13.5" fill="#444" text-anchor="middle">29</text></svg>
<div class="a" style="left:2px;top:539px;width:27px;height:1px;background:#c4c4c4"></div>
<svg class="tx" style="left:14.5px;top:540px" width="200" height="22"><text x="0" y="15" font-size="13.5" fill="#444" text-anchor="middle">30</text></svg>
<div class="a" style="left:2px;top:557px;width:27px;height:1px;background:#c4c4c4"></div>
<svg class="tx" style="left:14.5px;top:558px" width="200" height="22"><text x="0" y="15" font-size="13.5" fill="#444" text-anchor="middle">31</text></svg>
<div class="a" style="left:2px;top:575px;width:27px;height:1px;background:#c4c4c4"></div>
<svg class="tx" style="left:14.5px;top:576px" width="200" height="22"><text x="0" y="15" font-size="13.5" fill="#444" text-anchor="middle">32</text></svg>
<div class="a" style="left:30px;top:305px;width:1041px;height:1px;background:#d6d6d6"></div>
<div class="a" style="left:30px;top:323px;width:1041px;height:1px;background:#d6d6d6"></div>
<div class="a" style="left:30px;top:341px;width:1041px;height:1px;background:#d6d6d6"></div>
<div class="a" style="left:30px;top:359px;width:1041px;height:1px;background:#d6d6d6"></div>
<div class="a" style="left:30px;top:377px;width:1041px;height:1px;background:#d6d6d6"></div>
<div class="a" style="left:30px;top:395px;width:1041px;height:1px;background:#d6d6d6"></div>
<div class="a" style="left:30px;top:413px;width:1041px;height:1px;background:#d6d6d6"></div>
<div class="a" style="left:30px;top:431px;width:1041px;height:1px;background:#d6d6d6"></div>
<div class="a" style="left:30px;top:449px;width:1041px;height:1px;background:#d6d6d6"></div>
<div class="a" style="left:30px;top:467px;width:1041px;height:1px;background:#d6d6d6"></div>
<div class="a" style="left:30px;top:485px;width:1041px;height:1px;background:#d6d6d6"></div>
<div class="a" style="left:30px;top:503px;width:1041px;height:1px;background:#d6d6d6"></div>
<div class="a" style="left:30px;top:521px;width:1041px;height:1px;background:#d6d6d6"></div>
<div class="a" style="left:30px;top:539px;width:1041px;height:1px;background:#d6d6d6"></div>
<div class="a" style="left:30px;top:557px;width:1041px;height:1px;background:#d6d6d6"></div>
<div class="a" style="left:30px;top:575px;width:1041px;height:1px;background:#d6d6d6"></div>
<div class="a" style="left:148px;top:288px;width:1px;height:295px;background:#d6d6d6"></div>
<div class="a" style="left:237px;top:288px;width:1px;height:295px;background:#d6d6d6"></div>
<div class="a" style="left:347px;top:288px;width:1px;height:295px;background:#d6d6d6"></div>
<div class="a" style="left:417px;top:288px;width:1px;height:295px;background:#d6d6d6"></div>
<div class="a" style="left:486px;top:288px;width:1px;height:295px;background:#d6d6d6"></div>
<div class="a" style="left:549px;top:288px;width:1px;height:295px;background:#d6d6d6"></div>
<div class="a" style="left:622px;top:288px;width:1px;height:295px;background:#d6d6d6"></div>
<div class="a" style="left:818px;top:288px;width:1px;height:295px;background:#d6d6d6"></div>
<div class="a" style="left:973px;top:288px;width:1px;height:295px;background:#d6d6d6"></div>
<div class="a" style="left:1070px;top:288px;width:1px;height:295px;background:#d6d6d6"></div>
<div class="a" style="left:30px;top:18px;width:1041px;height:36px;background:#d9e1f2"></div>
<div class="a" style="left:30px;top:53px;width:1041px;height:1px;background:#8ea9db"></div>
<div class="a" style="left:30px;top:71px;width:1041px;height:1px;background:#8ea9db"></div>
<div class="a" style="left:30px;top:89px;width:1041px;height:1px;background:#8ea9db"></div>
<div class="a" style="left:30px;top:107px;width:1041px;height:1px;background:#8ea9db"></div>
<div class="a" style="left:30px;top:125px;width:1041px;height:1px;background:#8ea9db"></div>
<div class="a" style="left:30px;top:143px;width:1041px;height:1px;background:#8ea9db"></div>
<div class="a" style="left:30px;top:161px;width:1041px;height:1px;background:#8ea9db"></div>
<div class="a" style="left:30px;top:179px;width:1041px;height:1px;background:#8ea9db"></div>
<div class="a" style="left:30px;top:197px;width:1041px;height:1px;background:#8ea9db"></div>
<div class="a" style="left:30px;top:215px;width:1041px;height:1px;background:#8ea9db"></div>
<div class="a" style="left:30px;top:233px;width:1041px;height:1px;background:#8ea9db"></div>
<div class="a" style="left:30px;top:251px;width:1041px;height:1px;background:#8ea9db"></div>
<div class="a" style="left:30px;top:269px;width:1041px;height:1px;background:#8ea9db"></div>
<div class="a" style="left:30px;top:270px;width:1041px;height:18px;background:#d9e1f2"></div>
<svg class="tx" style="left:34px;top:18px" width="99" height="22"><text x="0" y="15" font-size="13.5" fill="#000" font-weight="bold" textLength="99" lengthAdjust="spacingAndGlyphs">合計 / 売上高</text></svg>
<svg class="tx" style="left:153px;top:18px" width="56" height="22"><text x="0" y="15" font-size="13.5" fill="#000" font-weight="bold" textLength="56" lengthAdjust="spacingAndGlyphs">列ラベル</text></svg>
<svg class="tx" style="left:34px;top:36px" width="56" height="22"><text x="0" y="15" font-size="13.5" fill="#000" font-weight="bold" textLength="56" lengthAdjust="spacingAndGlyphs">行ラベル</text></svg>
<div class="a" style="left:220px;top:19px;width:17px;height:16px;background:#fcfcfc;border:1px solid #b0b0b0"></div><svg style="left:225px;top:25px" width="7" height="4" viewBox="0 0 7 4" ><path d="M0 0H7L3.5 4Z" fill="#666"/></svg>
<div class="a" style="left:131px;top:37px;width:17px;height:16px;background:#fcfcfc;border:1px solid #b0b0b0"></div><svg style="left:136px;top:43px" width="7" height="4" viewBox="0 0 7 4" ><path d="M0 0H7L3.5 4Z" fill="#666"/></svg>
<svg class="tx" style="left:152px;top:36px" width="60" height="22"><text x="0" y="15" font-size="13.5" fill="#000" font-weight="bold" textLength="60" lengthAdjust="spacingAndGlyphs">Kindle版</text></svg>
<svg class="tx" style="left:242px;top:36px" width="91" height="22"><text x="0" y="15" font-size="13.5" fill="#000" font-weight="bold" textLength="91" lengthAdjust="spacingAndGlyphs">オーディオCD</text></svg>
<svg class="tx" style="left:350px;top:36px" width="55" height="22"><text x="0" y="15" font-size="13.5" fill="#000" font-weight="bold" textLength="55" lengthAdjust="spacingAndGlyphs">おもちゃ</text></svg>
<svg class="tx" style="left:421px;top:36px" width="54" height="22"><text x="0" y="15" font-size="13.5" fill="#000" font-weight="bold" textLength="54" lengthAdjust="spacingAndGlyphs">キッチン</text></svg>
<svg class="tx" style="left:489px;top:36px" width="51" height="22"><text x="0" y="15" font-size="13.5" fill="#000" font-weight="bold" textLength="51" lengthAdjust="spacingAndGlyphs">コミック</text></svg>
<svg class="tx" style="left:552px;top:36px" width="58" height="22"><text x="0" y="15" font-size="13.5" fill="#000" font-weight="bold" textLength="58" lengthAdjust="spacingAndGlyphs">スポーツ</text></svg>
<svg class="tx" style="left:624px;top:36px" width="171" height="22"><text x="0" y="15" font-size="13.5" fill="#000" font-weight="bold" textLength="171" lengthAdjust="spacingAndGlyphs">ソフトウェア・ダウンロード</text></svg>
<svg class="tx" style="left:821px;top:36px" width="134" height="22"><text x="0" y="15" font-size="13.5" fill="#000" font-weight="bold" textLength="134" lengthAdjust="spacingAndGlyphs">デジタルミュージック</text></svg>
<div class="a" style="left:974px;top:36px;width:96px;height:18px;overflow:hidden"><svg class="tx" style="left:3px;top:0px" width="120" height="21"><text x="0" y="15" font-size="13" fill="#000" font-weight="bold" textLength="120" lengthAdjust="spacingAndGlyphs">パソコン・周辺機器</text></svg></div>
<div class="a" style="left:37px;top:60px;width:9px;height:9px;background:#f4f6fb;border:1px solid #8a9bbd"></div>
<svg style="left:37px;top:60px" width="9" height="9" viewBox="0 0 9 9" ><path d="M2 4.5H7M4.5 2V7" stroke="#39527f" stroke-width="1"/></svg>
<svg class="tx" style="left:48px;top:54px" width="24" height="22"><text x="0" y="15" font-size="13.5" fill="#000" font-weight="bold" textLength="24" lengthAdjust="spacingAndGlyphs">1月</text></svg>
<div class="a" style="left:37px;top:78px;width:9px;height:9px;background:#f4f6fb;border:1px solid #8a9bbd"></div>
<svg style="left:37px;top:78px" width="9" height="9" viewBox="0 0 9 9" ><path d="M2 4.5H7M4.5 2V7" stroke="#39527f" stroke-width="1"/></svg>
<svg class="tx" style="left:48px;top:72px" width="24" height="22"><text x="0" y="15" font-size="13.5" fill="#000" font-weight="bold" textLength="24" lengthAdjust="spacingAndGlyphs">2月</text></svg>
<div class="a" style="left:37px;top:96px;width:9px;height:9px;background:#f4f6fb;border:1px solid #8a9bbd"></div>
<svg style="left:37px;top:96px" width="9" height="9" viewBox="0 0 9 9" ><path d="M2 4.5H7M4.5 2V7" stroke="#39527f" stroke-width="1"/></svg>
<svg class="tx" style="left:48px;top:90px" width="24" height="22"><text x="0" y="15" font-size="13.5" fill="#000" font-weight="bold" textLength="24" lengthAdjust="spacingAndGlyphs">3月</text></svg>
<div class="a" style="left:37px;top:114px;width:9px;height:9px;background:#f4f6fb;border:1px solid #8a9bbd"></div>
<svg style="left:37px;top:114px" width="9" height="9" viewBox="0 0 9 9" ><path d="M2 4.5H7M4.5 2V7" stroke="#39527f" stroke-width="1"/></svg>
<svg class="tx" style="left:48px;top:108px" width="24" height="22"><text x="0" y="15" font-size="13.5" fill="#000" font-weight="bold" textLength="24" lengthAdjust="spacingAndGlyphs">4月</text></svg>
<div class="a" style="left:37px;top:132px;width:9px;height:9px;background:#f4f6fb;border:1px solid #8a9bbd"></div>
<svg style="left:37px;top:132px" width="9" height="9" viewBox="0 0 9 9" ><path d="M2 4.5H7M4.5 2V7" stroke="#39527f" stroke-width="1"/></svg>
<svg class="tx" style="left:48px;top:126px" width="24" height="22"><text x="0" y="15" font-size="13.5" fill="#000" font-weight="bold" textLength="24" lengthAdjust="spacingAndGlyphs">5月</text></svg>
<div class="a" style="left:37px;top:150px;width:9px;height:9px;background:#f4f6fb;border:1px solid #8a9bbd"></div>
<svg style="left:37px;top:150px" width="9" height="9" viewBox="0 0 9 9" ><path d="M2 4.5H7M4.5 2V7" stroke="#39527f" stroke-width="1"/></svg>
<svg class="tx" style="left:48px;top:144px" width="24" height="22"><text x="0" y="15" font-size="13.5" fill="#000" font-weight="bold" textLength="24" lengthAdjust="spacingAndGlyphs">6月</text></svg>
<div class="a" style="left:37px;top:168px;width:9px;height:9px;background:#f4f6fb;border:1px solid #8a9bbd"></div>
<svg style="left:37px;top:168px" width="9" height="9" viewBox="0 0 9 9" ><path d="M2 4.5H7M4.5 2V7" stroke="#39527f" stroke-width="1"/></svg>
<svg class="tx" style="left:48px;top:162px" width="24" height="22"><text x="0" y="15" font-size="13.5" fill="#000" font-weight="bold" textLength="24" lengthAdjust="spacingAndGlyphs">7月</text></svg>
<div class="a" style="left:37px;top:186px;width:9px;height:9px;background:#f4f6fb;border:1px solid #8a9bbd"></div>
<svg style="left:37px;top:186px" width="9" height="9" viewBox="0 0 9 9" ><path d="M2 4.5H7M4.5 2V7" stroke="#39527f" stroke-width="1"/></svg>
<svg class="tx" style="left:48px;top:180px" width="24" height="22"><text x="0" y="15" font-size="13.5" fill="#000" font-weight="bold" textLength="24" lengthAdjust="spacingAndGlyphs">8月</text></svg>
<div class="a" style="left:37px;top:204px;width:9px;height:9px;background:#f4f6fb;border:1px solid #8a9bbd"></div>
<svg style="left:37px;top:204px" width="9" height="9" viewBox="0 0 9 9" ><path d="M2 4.5H7M4.5 2V7" stroke="#39527f" stroke-width="1"/></svg>
<svg class="tx" style="left:48px;top:198px" width="24" height="22"><text x="0" y="15" font-size="13.5" fill="#000" font-weight="bold" textLength="24" lengthAdjust="spacingAndGlyphs">9月</text></svg>
<div class="a" style="left:37px;top:222px;width:9px;height:9px;background:#f4f6fb;border:1px solid #8a9bbd"></div>
<svg style="left:37px;top:222px" width="9" height="9" viewBox="0 0 9 9" ><path d="M2 4.5H7M4.5 2V7" stroke="#39527f" stroke-width="1"/></svg>
<svg class="tx" style="left:48px;top:216px" width="34" height="22"><text x="0" y="15" font-size="13.5" fill="#000" font-weight="bold" textLength="34" lengthAdjust="spacingAndGlyphs">10月</text></svg>
<div class="a" style="left:37px;top:240px;width:9px;height:9px;background:#f4f6fb;border:1px solid #8a9bbd"></div>
<svg style="left:37px;top:240px" width="9" height="9" viewBox="0 0 9 9" ><path d="M2 4.5H7M4.5 2V7" stroke="#39527f" stroke-width="1"/></svg>
<svg class="tx" style="left:48px;top:234px" width="34" height="22"><text x="0" y="15" font-size="13.5" fill="#000" font-weight="bold" textLength="34" lengthAdjust="spacingAndGlyphs">11月</text></svg>
<div class="a" style="left:37px;top:258px;width:9px;height:9px;background:#f4f6fb;border:1px solid #8a9bbd"></div>
<svg style="left:37px;top:258px" width="9" height="9" viewBox="0 0 9 9" ><path d="M2 4.5H7M4.5 2V7" stroke="#39527f" stroke-width="1"/></svg>
<svg class="tx" style="left:48px;top:252px" width="34" height="22"><text x="0" y="15" font-size="13.5" fill="#000" font-weight="bold" textLength="34" lengthAdjust="spacingAndGlyphs">12月</text></svg>
<svg class="tx" style="left:34px;top:270px" width="29" height="22"><text x="0" y="15" font-size="13.5" fill="#000" font-weight="bold" textLength="29" lengthAdjust="spacingAndGlyphs">総計</text></svg>
<svg class="tx" style="left:197px;top:72px" width="35" height="22"><text x="0" y="15" font-size="13.5" fill="#000" font-weight="bold" textLength="35" lengthAdjust="spacingAndGlyphs">1864</text></svg>
<svg class="tx" style="left:447px;top:72px" width="35" height="22"><text x="0" y="15" font-size="13.5" fill="#000" font-weight="bold" textLength="35" lengthAdjust="spacingAndGlyphs">1088</text></svg>
<svg class="tx" style="left:509px;top:72px" width="35" height="22"><text x="0" y="15" font-size="13.5" fill="#000" font-weight="bold" textLength="35" lengthAdjust="spacingAndGlyphs">1219</text></svg>
<svg class="tx" style="left:447px;top:90px" width="35" height="22"><text x="0" y="15" font-size="13.5" fill="#000" font-weight="bold" textLength="35" lengthAdjust="spacingAndGlyphs">1982</text></svg>
<svg class="tx" style="left:378px;top:108px" width="35" height="22"><text x="0" y="15" font-size="13.5" fill="#000" font-weight="bold" textLength="35" lengthAdjust="spacingAndGlyphs">2546</text></svg>
<svg class="tx" style="left:197px;top:126px" width="35" height="22"><text x="0" y="15" font-size="13.5" fill="#000" font-weight="bold" textLength="35" lengthAdjust="spacingAndGlyphs">3822</text></svg>
<svg class="tx" style="left:308px;top:126px" width="35" height="22"><text x="0" y="15" font-size="13.5" fill="#000" font-weight="bold" textLength="35" lengthAdjust="spacingAndGlyphs">1469</text></svg>
<svg class="tx" style="left:944px;top:144px" width="26" height="22"><text x="0" y="15" font-size="13.5" fill="#000" font-weight="bold" textLength="26" lengthAdjust="spacingAndGlyphs">150</text></svg>
<svg class="tx" style="left:573px;top:162px" width="44" height="22"><text x="0" y="15" font-size="13.5" fill="#000" font-weight="bold" textLength="44" lengthAdjust="spacingAndGlyphs">19222</text></svg>
<svg class="tx" style="left:197px;top:198px" width="35" height="22"><text x="0" y="15" font-size="13.5" fill="#000" font-weight="bold" textLength="35" lengthAdjust="spacingAndGlyphs">1512</text></svg>
<svg class="tx" style="left:582px;top:216px" width="35" height="22"><text x="0" y="15" font-size="13.5" fill="#000" font-weight="bold" textLength="35" lengthAdjust="spacingAndGlyphs">1167</text></svg>
<svg class="tx" style="left:197px;top:234px" width="35" height="22"><text x="0" y="15" font-size="13.5" fill="#000" font-weight="bold" textLength="35" lengthAdjust="spacingAndGlyphs">3874</text></svg>
<svg class="tx" style="left:378px;top:252px" width="35" height="22"><text x="0" y="15" font-size="13.5" fill="#000" font-weight="bold" textLength="35" lengthAdjust="spacingAndGlyphs">7656</text></svg>
<svg class="tx" style="left:456px;top:252px" width="26" height="22"><text x="0" y="15" font-size="13.5" fill="#000" font-weight="bold" textLength="26" lengthAdjust="spacingAndGlyphs">774</text></svg>
<svg class="tx" style="left:769px;top:252px" width="44" height="22"><text x="0" y="15" font-size="13.5" fill="#000" font-weight="bold" textLength="44" lengthAdjust="spacingAndGlyphs">13562</text></svg>
<svg class="tx" style="left:188px;top:270px" width="44" height="22"><text x="0" y="15" font-size="13.5" fill="#000" font-weight="bold" textLength="44" lengthAdjust="spacingAndGlyphs">11072</text></svg>
<svg class="tx" style="left:308px;top:270px" width="35" height="22"><text x="0" y="15" font-size="13.5" fill="#000" font-weight="bold" textLength="35" lengthAdjust="spacingAndGlyphs">1469</text></svg>
<svg class="tx" style="left:369px;top:270px" width="44" height="22"><text x="0" y="15" font-size="13.5" fill="#000" font-weight="bold" textLength="44" lengthAdjust="spacingAndGlyphs">10202</text></svg>
<svg class="tx" style="left:447px;top:270px" width="35" height="22"><text x="0" y="15" font-size="13.5" fill="#000" font-weight="bold" textLength="35" lengthAdjust="spacingAndGlyphs">3844</text></svg>
<svg class="tx" style="left:509px;top:270px" width="35" height="22"><text x="0" y="15" font-size="13.5" fill="#000" font-weight="bold" textLength="35" lengthAdjust="spacingAndGlyphs">1219</text></svg>
<svg class="tx" style="left:573px;top:270px" width="44" height="22"><text x="0" y="15" font-size="13.5" fill="#000" font-weight="bold" textLength="44" lengthAdjust="spacingAndGlyphs">20389</text></svg>
<svg class="tx" style="left:769px;top:270px" width="44" height="22"><text x="0" y="15" font-size="13.5" fill="#000" font-weight="bold" textLength="44" lengthAdjust="spacingAndGlyphs">13562</text></svg>
<svg class="tx" style="left:944px;top:270px" width="26" height="22"><text x="0" y="15" font-size="13.5" fill="#000" font-weight="bold" textLength="26" lengthAdjust="spacingAndGlyphs">150</text></svg>
<div class="a" style="left:1060px;top:270px;width:10px;height:18px;overflow:hidden"><svg class="tx" style="left:7.5px;top:0px" width="9" height="21"><text x="0" y="15" font-size="13" fill="#000" font-weight="bold" textLength="9" lengthAdjust="spacingAndGlyphs">7</text></svg></div>
<div class="a" style="left:2px;top:583px;width:1069px;height:1px;background:#9e9e9e"></div>
<div class="a" style="left:1070px;top:17px;width:1px;height:567px;background:#9e9e9e"></div>
<div class="a" style="left:1071px;top:0px;width:21px;height:584px;background:#e6e6e6"></div>
<div class="a" style="left:1074px;top:17px;width:15px;height:552px;background:#d4d4d4"></div>
<div class="a" style="left:1074px;top:2px;width:15px;height:15px;background:#fff;border:1px solid #b4b4b4"></div>
<svg style="left:1078px;top:7px" width="7" height="4" viewBox="0 0 7 4" ><path d="M0 4H7L3.5 0Z" fill="#777"/></svg>
<div class="a" style="left:1074px;top:17px;width:15px;height:534px;background:#fff;border:1px solid #b4b4b4"></div>
<div class="a" style="left:1074px;top:569px;width:15px;height:15px;background:#fff;border:1px solid #b4b4b4"></div>
<svg style="left:1078px;top:575px" width="7" height="4" viewBox="0 0 7 4" ><path d="M0 0H7L3.5 4Z" fill="#777"/></svg>
</div>
<!-- ===== Chart ===== -->
<div id="chart" class="a" style="left:76px;top:499px;width:647px;height:289px;background:#fff;border:1px solid #d9d9d9">
<div class="a" style="left:10px;top:7px;width:72px;height:17px;background:linear-gradient(#e2e2e2,#c4c4c4)"></div>
<svg class="tx" style="left:14px;top:6.5px" width="65" height="20"><text x="0" y="14.0" font-size="12" fill="#111" textLength="65" lengthAdjust="spacingAndGlyphs">合計 / 売上高</text></svg>
<svg style="left:0;top:0" width="645" height="287" shape-rendering="crispEdges"><rect x="55" y="40" width="417" height="1" fill="#d9d9d9"/><rect x="55" y="66" width="417" height="1" fill="#d9d9d9"/><rect x="55" y="93" width="417" height="1" fill="#d9d9d9"/><rect x="55" y="120" width="417" height="1" fill="#d9d9d9"/><rect x="55" y="147" width="417" height="1" fill="#d9d9d9"/><rect x="55" y="174" width="417" height="1" fill="#d9d9d9"/><rect x="55" y="201" width="417" height="1" fill="#d9d9d9"/><rect x="55" y="228" width="417" height="1" fill="#d9d9d9"/><rect x="67.0" y="128.8" width="11" height="5.0" fill="#b7d9a3"/><rect x="67.0" y="133.8" width="11" height="9.1" fill="#4e7b31"/><rect x="67.0" y="142.9" width="11" height="4.2" fill="#b58a06"/><rect x="67.0" y="147.1" width="11" height="4.8" fill="#7f5f02"/><rect x="67.0" y="151.9" width="11" height="76.4" fill="#8cc168"/><rect x="102.0" y="121.0" width="11" height="23.8" fill="#ed7d31"/><rect x="102.0" y="144.8" width="11" height="4.2" fill="#b7d9a3"/><rect x="102.0" y="149.0" width="11" height="6.7" fill="#b58a06"/><rect x="102.0" y="155.7" width="11" height="1.1" fill="#ffc000"/><rect x="102.0" y="156.8" width="11" height="1.2" fill="#3a4d1c"/><rect x="102.0" y="158.0" width="11" height="5.0" fill="#d35f1b"/><rect x="102.0" y="163.0" width="11" height="59.9" fill="#8cc168"/><rect x="102.0" y="222.9" width="11" height="2.4" fill="#9a6d0b"/><rect x="102.0" y="225.3" width="11" height="1.8" fill="#ed7d31"/><rect x="102.0" y="227.1" width="11" height="1.2" fill="#f4b183"/><rect x="137.0" y="201.5" width="11" height="4.0" fill="#b7d9a3"/><rect x="137.0" y="205.5" width="11" height="1.1" fill="#9c5a0e"/><rect x="137.0" y="206.6" width="11" height="19.2" fill="#8cc168"/><rect x="137.0" y="225.8" width="11" height="2.5" fill="#9e3d0c"/><rect x="171.0" y="114.0" width="11" height="11.9" fill="#b7d9a3"/><rect x="171.0" y="125.9" width="11" height="5.1" fill="#4e7b31"/><rect x="171.0" y="131.0" width="11" height="5.0" fill="#b58a06"/><rect x="171.0" y="136.0" width="11" height="3.8" fill="#a9d18e"/><rect x="171.0" y="139.8" width="11" height="84.9" fill="#8cc168"/><rect x="171.0" y="224.7" width="11" height="3.6" fill="#70ad47"/><rect x="206.0" y="117.0" width="11" height="4.9" fill="#b7d9a3"/><rect x="206.0" y="121.9" width="11" height="2.0" fill="#4e7b31"/><rect x="206.0" y="123.9" width="11" height="3.8" fill="#b58a06"/><rect x="206.0" y="127.7" width="11" height="1.1" fill="#ffd966"/><rect x="206.0" y="128.8" width="11" height="93.0" fill="#8cc168"/><rect x="206.0" y="221.8" width="11" height="2.0" fill="#ffc000"/><rect x="206.0" y="223.8" width="11" height="4.5" fill="#ed7d31"/><rect x="241.0" y="89.1" width="11" height="4.2" fill="#b7d9a3"/><rect x="241.0" y="93.3" width="11" height="9.8" fill="#4e7b31"/><rect x="241.0" y="103.1" width="11" height="8.9" fill="#b58a06"/><rect x="241.0" y="112.0" width="11" height="4.9" fill="#a9d18e"/><rect x="241.0" y="116.9" width="11" height="111.4" fill="#8cc168"/><rect x="276.0" y="115.0" width="11" height="5.1" fill="#4e7b31"/><rect x="276.0" y="120.1" width="11" height="2.9" fill="#b58a06"/><rect x="276.0" y="123.0" width="11" height="3.9" fill="#7f5f02"/><rect x="276.0" y="126.9" width="11" height="76.0" fill="#8cc168"/><rect x="276.0" y="202.9" width="11" height="25.4" fill="#43682b"/><rect x="310.0" y="118.8" width="11" height="2.1" fill="#b7d9a3"/><rect x="310.0" y="120.9" width="11" height="1.1" fill="#4e7b31"/><rect x="310.0" y="122.0" width="11" height="0.9" fill="#d35f1b"/><rect x="310.0" y="122.9" width="11" height="0.8" fill="#7f5f02"/><rect x="310.0" y="123.7" width="11" height="104.6" fill="#8cc168"/><rect x="345.0" y="129.0" width="11" height="3.2" fill="#b7d9a3"/><rect x="345.0" y="132.2" width="11" height="1.7" fill="#4e7b31"/><rect x="345.0" y="133.9" width="11" height="2.1" fill="#b58a06"/><rect x="345.0" y="136.0" width="11" height="1.9" fill="#d35f1b"/><rect x="345.0" y="137.9" width="11" height="2.1" fill="#43682b"/><rect x="345.0" y="140.0" width="11" height="87.1" fill="#8cc168"/><rect x="345.0" y="227.1" width="11" height="1.2" fill="#f2995f"/><rect x="380.0" y="174.2" width="11" height="6.0" fill="#b7d9a3"/><rect x="380.0" y="180.2" width="11" height="5.9" fill="#4e7b31"/><rect x="380.0" y="186.1" width="11" height="1.9" fill="#9a6d0b"/><rect x="380.0" y="188.0" width="11" height="38.9" fill="#8cc168"/><rect x="380.0" y="226.9" width="11" height="1.4" fill="#4e7b31"/><rect x="414.0" y="99.1" width="11" height="2.0" fill="#b7d9a3"/><rect x="414.0" y="101.1" width="11" height="9.1" fill="#4e7b31"/><rect x="414.0" y="110.2" width="11" height="2.0" fill="#b58a06"/><rect x="414.0" y="112.2" width="11" height="10.9" fill="#a9d18e"/><rect x="414.0" y="123.1" width="11" height="1.1" fill="#f4b183"/><rect x="414.0" y="124.2" width="11" height="100.0" fill="#8cc168"/><rect x="414.0" y="224.2" width="11" height="4.1" fill="#ed7d31"/><rect x="449.0" y="68.1" width="11" height="3.1" fill="#4e7b31"/><rect x="449.0" y="71.2" width="11" height="8.9" fill="#b58a06"/><rect x="449.0" y="80.1" width="11" height="2.9" fill="#f2995f"/><rect x="449.0" y="83.0" width="11" height="1.9" fill="#ffe08a"/><rect x="449.0" y="84.9" width="11" height="3.9" fill="#5e913b"/><rect x="449.0" y="88.8" width="11" height="7.2" fill="#cc9a06"/><rect x="449.0" y="96.0" width="11" height="103.1" fill="#8cc168"/><rect x="449.0" y="199.1" width="11" height="18.1" fill="#f2995f"/><rect x="449.0" y="217.2" width="11" height="1.1" fill="#9e3d0c"/><rect x="449.0" y="218.3" width="11" height="10.0" fill="#70ad47"/></svg>
<svg class="tx" style="left:7.0px;top:30.299999999999997px" width="36.5" height="18"><text x="0" y="13.0" font-size="11" fill="#595959" textLength="36.5" lengthAdjust="spacingAndGlyphs">140000</text></svg>
<svg class="tx" style="left:7.0px;top:56.3px" width="36.5" height="18"><text x="0" y="13.0" font-size="11" fill="#595959" textLength="36.5" lengthAdjust="spacingAndGlyphs">120000</text></svg>
<svg class="tx" style="left:7.0px;top:83.3px" width="36.5" height="18"><text x="0" y="13.0" font-size="11" fill="#595959" textLength="36.5" lengthAdjust="spacingAndGlyphs">100000</text></svg>
<svg class="tx" style="left:13.0px;top:110.3px" width="30.5" height="18"><text x="0" y="13.0" font-size="11" fill="#595959" textLength="30.5" lengthAdjust="spacingAndGlyphs">80000</text></svg>
<svg class="tx" style="left:13.0px;top:137.3px" width="30.5" height="18"><text x="0" y="13.0" font-size="11" fill="#595959" textLength="30.5" lengthAdjust="spacingAndGlyphs">60000</text></svg>
<svg class="tx" style="left:13.0px;top:164.3px" width="30.5" height="18"><text x="0" y="13.0" font-size="11" fill="#595959" textLength="30.5" lengthAdjust="spacingAndGlyphs">40000</text></svg>
<svg class="tx" style="left:13.0px;top:191.3px" width="30.5" height="18"><text x="0" y="13.0" font-size="11" fill="#595959" textLength="30.5" lengthAdjust="spacingAndGlyphs">20000</text></svg>
<svg class="tx" style="left:37.0px;top:218.3px" width="6.5" height="18"><text x="0" y="13.0" font-size="11" fill="#595959" textLength="6.5" lengthAdjust="spacingAndGlyphs">0</text></svg>
<svg class="tx" style="left:63.5px;top:235px" width="18" height="18"><text x="0" y="13" font-size="11" fill="#595959" textLength="18" lengthAdjust="spacingAndGlyphs">1月</text></svg>
<svg class="tx" style="left:98.3px;top:235px" width="18" height="18"><text x="0" y="13" font-size="11" fill="#595959" textLength="18" lengthAdjust="spacingAndGlyphs">2月</text></svg>
<svg class="tx" style="left:133.1px;top:235px" width="18" height="18"><text x="0" y="13" font-size="11" fill="#595959" textLength="18" lengthAdjust="spacingAndGlyphs">3月</text></svg>
<svg class="tx" style="left:167.9px;top:235px" width="18" height="18"><text x="0" y="13" font-size="11" fill="#595959" textLength="18" lengthAdjust="spacingAndGlyphs">4月</text></svg>
<svg class="tx" style="left:202.7px;top:235px" width="18" height="18"><text x="0" y="13" font-size="11" fill="#595959" textLength="18" lengthAdjust="spacingAndGlyphs">5月</text></svg>
<svg class="tx" style="left:237.5px;top:235px" width="18" height="18"><text x="0" y="13" font-size="11" fill="#595959" textLength="18" lengthAdjust="spacingAndGlyphs">6月</text></svg>
<svg class="tx" style="left:272.3px;top:235px" width="18" height="18"><text x="0" y="13" font-size="11" fill="#595959" textLength="18" lengthAdjust="spacingAndGlyphs">7月</text></svg>
<svg class="tx" style="left:307.1px;top:235px" width="18" height="18"><text x="0" y="13" font-size="11" fill="#595959" textLength="18" lengthAdjust="spacingAndGlyphs">8月</text></svg>
<svg class="tx" style="left:341.9px;top:235px" width="18" height="18"><text x="0" y="13" font-size="11" fill="#595959" textLength="18" lengthAdjust="spacingAndGlyphs">9月</text></svg>
<svg class="tx" style="left:373.7px;top:235px" width="24" height="18"><text x="0" y="13" font-size="11" fill="#595959" textLength="24" lengthAdjust="spacingAndGlyphs">10月</text></svg>
<svg class="tx" style="left:408.5px;top:235px" width="24" height="18"><text x="0" y="13" font-size="11" fill="#595959" textLength="24" lengthAdjust="spacingAndGlyphs">11月</text></svg>
<svg class="tx" style="left:443.3px;top:235px" width="24" height="18"><text x="0" y="13" font-size="11" fill="#595959" textLength="24" lengthAdjust="spacingAndGlyphs">12月</text></svg>
<div class="a" style="left:10px;top:261px;width:32px;height:17px;background:linear-gradient(#e2e2e2,#c4c4c4)"></div>
<svg class="tx" style="left:14px;top:259.5px" width="12" height="20"><text x="0" y="14.0" font-size="12" fill="#111" textLength="12" lengthAdjust="spacingAndGlyphs">月</text></svg>
<svg style="left:30px;top:268px" width="7" height="4" viewBox="0 0 7 4" ><path d="M0 0H7L3.5 4Z" fill="#444"/></svg>
<div class="a" style="left:43px;top:261px;width:43px;height:17px;background:linear-gradient(#e2e2e2,#c4c4c4)"></div>
<svg class="tx" style="left:47px;top:259.5px" width="23" height="20"><text x="0" y="14.0" font-size="12" fill="#111" textLength="23" lengthAdjust="spacingAndGlyphs">日付</text></svg>
<svg style="left:74px;top:268px" width="7" height="4" viewBox="0 0 7 4" ><path d="M0 0H7L3.5 4Z" fill="#444"/></svg>
<div class="a" style="left:488px;top:56px;width:147px;height:17px;background:linear-gradient(#e2e2e2,#c4c4c4)"></div>
<svg class="tx" style="left:492px;top:56.5px" width="39" height="18"><text x="0" y="13.0" font-size="11" fill="#111" textLength="39" lengthAdjust="spacingAndGlyphs">カテゴリー</text></svg>
<svg style="left:623px;top:63px" width="7" height="4" viewBox="0 0 7 4" ><path d="M0 0H7L3.5 4Z" fill="#333"/></svg>
<div class="a" style="left:493px;top:82.3px;width:7px;height:7px;background:#ed7d31"></div>
<svg class="tx" style="left:501.5px;top:75.5px" width="35" height="20"><text x="0" y="14.0" font-size="12" fill="#595959" textLength="35" lengthAdjust="spacingAndGlyphs">腕時計</text></svg>
<div class="a" style="left:493px;top:104.7px;width:7px;height:7px;background:#a9d18e"></div>
<svg class="tx" style="left:501.5px;top:97.9px" width="71" height="20"><text x="0" y="14.0" font-size="12" fill="#595959" textLength="71" lengthAdjust="spacingAndGlyphs">和書(大型本)</text></svg>
<div class="a" style="left:493px;top:127.2px;width:7px;height:7px;background:#ffd966"></div>
<svg class="tx" style="left:501.5px;top:120.4px" width="35" height="20"><text x="0" y="14.0" font-size="12" fill="#595959" textLength="35" lengthAdjust="spacingAndGlyphs">文庫本</text></svg>
<div class="a" style="left:493px;top:149.6px;width:7px;height:7px;background:#f4b183"></div>
<svg class="tx" style="left:501.5px;top:142.8px" width="105" height="20"><text x="0" y="14.0" font-size="12" fill="#595959" textLength="105" lengthAdjust="spacingAndGlyphs">服＆ファッション小物</text></svg>
<div class="a" style="left:493px;top:172.0px;width:7px;height:7px;background:#548235"></div>
<svg class="tx" style="left:501.5px;top:165.2px" width="113" height="20"><text x="0" y="14.0" font-size="12" fill="#595959" textLength="113" lengthAdjust="spacingAndGlyphs">単行本(ハードカバー)</text></svg>
<div class="a" style="left:493px;top:194.4px;width:7px;height:7px;background:#bf9000"></div>
<svg class="tx" style="left:501.5px;top:187.6px" width="108" height="20"><text x="0" y="14.0" font-size="12" fill="#595959" textLength="108" lengthAdjust="spacingAndGlyphs">単行本(ソフトカバー)</text></svg>
<div class="a" style="left:493px;top:216.9px;width:7px;height:7px;background:#c55a11"></div>
<svg class="tx" style="left:501.5px;top:210.1px" width="23" height="20"><text x="0" y="14.0" font-size="12" fill="#595959" textLength="23" lengthAdjust="spacingAndGlyphs">食品</text></svg>
<div class="a" style="left:602px;top:261px;width:15px;height:17px;background:linear-gradient(#e2e2e2,#c4c4c4)"></div>
<svg style="left:605px;top:265px" width="9" height="9" viewBox="0 0 9 9" ><path d="M.5 4.6H8.5M4.5 .6V8.6" stroke="#7a7a7a" stroke-width="1.8"/></svg>
<div class="a" style="left:618px;top:261px;width:15px;height:17px;background:linear-gradient(#e2e2e2,#c4c4c4)"></div>
<svg style="left:621px;top:265px" width="9" height="9" viewBox="0 0 9 9" ><path d="M.8 4.6H7.5" stroke="#7a7a7a" stroke-width="1.8"/></svg>
</div>
<!-- ===== Timeline ===== -->
<div id="tlclip" class="a" style="left:30px;top:232px;width:1040px;height:565px;overflow:hidden">
<div class="a" style="left:690px;top:289px;width:361px;height:168px;background:#fff;border-bottom:1px solid #8c8c8c;box-shadow:inset 1px 1px 0 #a9bbe2, inset 2px 2px 0 #4472c4"></div>
<svg class="tx" style="left:700px;top:295px" width="27" height="23"><text x="0" y="16" font-size="14" fill="#111" font-weight="bold" textLength="27" lengthAdjust="spacingAndGlyphs">日付</text></svg>
<svg style="left:1017px;top:299px" width="16" height="16" viewBox="0 0 16 16" ><path d="M0 0H11L6.8 5V10L4.4 8.5V5Z" fill="#b2b2b2"/><path d="M8.5 7.5L15.3 14.3M15.3 7.5L8.5 14.3" stroke="#b2b2b2" stroke-width="1.3"/></svg>
<div class="a" style="left:697px;top:323px;width:335px;height:1px;background:#4472c4"></div>
<svg class="tx" style="left:699px;top:328px" width="76" height="21"><text x="0" y="15" font-size="13" fill="#3d62a8" textLength="76" lengthAdjust="spacingAndGlyphs">すべての期間</text></svg>
<svg class="tx" style="left:1004px;top:332.5px" width="10" height="18"><text x="0" y="13.0" font-size="11" fill="#8a8a8a" textLength="10" lengthAdjust="spacingAndGlyphs">月</text></svg>
<svg style="left:1021px;top:339px" width="7" height="4" viewBox="0 0 7 4" ><path d="M0 0H7L3.5 4Z" fill="#aaa"/></svg>
<svg class="tx" style="left:706.5px;top:359px" width="26" height="20"><text x="0" y="14" font-size="12" fill="#8a8a8a" textLength="26" lengthAdjust="spacingAndGlyphs">2015</text></svg>
<svg class="tx" style="left:706.6px;top:385px" width="6" height="20"><text x="0" y="14" font-size="12" fill="#808080" textLength="6" lengthAdjust="spacingAndGlyphs">3</text></svg>
<svg class="tx" style="left:739.1px;top:385px" width="6" height="20"><text x="0" y="14" font-size="12" fill="#808080" textLength="6" lengthAdjust="spacingAndGlyphs">4</text></svg>
<svg class="tx" style="left:771.5px;top:385px" width="6" height="20"><text x="0" y="14" font-size="12" fill="#808080" textLength="6" lengthAdjust="spacingAndGlyphs">5</text></svg>
<svg class="tx" style="left:804.0px;top:385px" width="6" height="20"><text x="0" y="14" font-size="12" fill="#808080" textLength="6" lengthAdjust="spacingAndGlyphs">6</text></svg>
<svg class="tx" style="left:836.4px;top:385px" width="6" height="20"><text x="0" y="14" font-size="12" fill="#808080" textLength="6" lengthAdjust="spacingAndGlyphs">7</text></svg>
<svg class="tx" style="left:868.9px;top:385px" width="6" height="20"><text x="0" y="14" font-size="12" fill="#808080" textLength="6" lengthAdjust="spacingAndGlyphs">8</text></svg>
<svg class="tx" style="left:901.3px;top:385px" width="6" height="20"><text x="0" y="14" font-size="12" fill="#808080" textLength="6" lengthAdjust="spacingAndGlyphs">9</text></svg>
<svg class="tx" style="left:934.9px;top:385px" width="12.5" height="20"><text x="0" y="14" font-size="12" fill="#808080" textLength="12.5" lengthAdjust="spacingAndGlyphs">10</text></svg>
<div class="a" style="left:698px;top:408px;width:340px;height:17px;background:linear-gradient(#b6c6eb,#a3b8e6 40%,#4a74c8)"></div>
<div class="a" style="left:704.4px;top:408px;width:1px;height:17px;background:rgba(255,255,255,.35)"></div>
<div class="a" style="left:737.0px;top:408px;width:1px;height:17px;background:rgba(255,255,255,.35)"></div>
<div class="a" style="left:769.6px;top:408px;width:1px;height:17px;background:rgba(255,255,255,.35)"></div>
<div class="a" style="left:802.2px;top:408px;width:1px;height:17px;background:rgba(255,255,255,.35)"></div>
<div class="a" style="left:834.8px;top:408px;width:1px;height:17px;background:rgba(255,255,255,.35)"></div>
<div class="a" style="left:867.4px;top:408px;width:1px;height:17px;background:rgba(255,255,255,.35)"></div>
<div class="a" style="left:900.0px;top:408px;width:1px;height:17px;background:rgba(255,255,255,.35)"></div>
<div class="a" style="left:932.6px;top:408px;width:1px;height:17px;background:rgba(255,255,255,.35)"></div>
<div class="a" style="left:965.2px;top:408px;width:1px;height:17px;background:rgba(255,255,255,.35)"></div>
<div class="a" style="left:698px;top:432px;width:16px;height:16px;background:#fff;border:1px solid #b4b4b4"></div>
<svg style="left:703px;top:436.5px" width="5" height="8" viewBox="0 0 5 8" ><path d="M5 0V8L0 4Z" fill="#595959"/></svg>
<div class="a" style="left:714px;top:436px;width:41px;height:7px;background:#d9e1f2"></div>
<div class="a" style="left:755px;top:432px;width:300px;height:16px;background:#fff;border:1px solid #b4b4b4"></div>
<svg style="left:685.5px;top:284px" width="12" height="12"><circle cx="6" cy="6" r="4.6" fill="#fff" stroke="#8a8a8a" stroke-width="1.7"/></svg>
<svg style="left:859.5px;top:284px" width="12" height="12"><circle cx="6" cy="6" r="4.6" fill="#fff" stroke="#8a8a8a" stroke-width="1.7"/></svg>
<svg style="left:1033.5px;top:284px" width="12" height="12"><circle cx="6" cy="6" r="4.6" fill="#fff" stroke="#8a8a8a" stroke-width="1.7"/></svg>
<svg style="left:685.5px;top:367px" width="12" height="12"><circle cx="6" cy="6" r="4.6" fill="#fff" stroke="#8a8a8a" stroke-width="1.7"/></svg>
<svg style="left:685.5px;top:450.5px" width="12" height="12"><circle cx="6" cy="6" r="4.6" fill="#fff" stroke="#8a8a8a" stroke-width="1.7"/></svg>
<svg style="left:859.5px;top:450.5px" width="12" height="12"><circle cx="6" cy="6" r="4.6" fill="#fff" stroke="#8a8a8a" stroke-width="1.7"/></svg>
<svg style="left:1033.5px;top:450.5px" width="12" height="12"><circle cx="6" cy="6" r="4.6" fill="#fff" stroke="#8a8a8a" stroke-width="1.7"/></svg>
<svg style="left:1033.5px;top:367px" width="12" height="12"><circle cx="6" cy="6" r="4.6" fill="#fff" stroke="#8a8a8a" stroke-width="1.7"/></svg>
</div>
<div id="menu" class="a" style="z-index:5;left:993px;top:587px;width:100px;height:116px;background:#fff;border:1px solid #c6c6c6;box-shadow:1px 2px 3px rgba(0,0,0,.18)">
<div class="a" style="left:1px;top:29px;width:96px;height:28px;background:#cfcdcb"></div>
<svg class="tx" style="left:38px;top:4px" width="12" height="20"><text x="0" y="14" font-size="12" fill="#222" textLength="12" lengthAdjust="spacingAndGlyphs">年</text></svg>
<svg class="tx" style="left:38px;top:33px" width="35.5" height="20"><text x="0" y="14" font-size="12" fill="#222" textLength="35.5" lengthAdjust="spacingAndGlyphs">四半期</text></svg>
<svg class="tx" style="left:38px;top:61px" width="11" height="20"><text x="0" y="14" font-size="12" fill="#222" textLength="11" lengthAdjust="spacingAndGlyphs">月</text></svg>
<svg class="tx" style="left:38px;top:88.5px" width="11" height="20"><text x="0" y="14.0" font-size="12" fill="#222" textLength="11" lengthAdjust="spacingAndGlyphs">日</text></svg>
<svg style="left:16px;top:66px" width="10" height="8" viewBox="0 0 10 8" ><path d="M1 4L3.8 7L9 1" fill="none" stroke="#444" stroke-width="1.5"/></svg>
</div>
<svg style="z-index:6;left:1053px;top:631px" width="13" height="20" viewBox="0 0 13 20" ><path d="M.7.8V16L4.3 12.6L6.9 18.6L9.3 17.6L6.7 11.7H11.6Z" fill="#fff" stroke="#000" stroke-width="1"/></svg>
<!-- ===== Sheet tabs / status ===== -->
<div id="sheettabs" class="a" style="left:0;top:798px;width:1093px;height:27px;background:#e6e6e6">
<svg style="left:27px;top:8px" width="5" height="8" viewBox="0 0 5 8" ><path d="M5 0V8L0 4Z" fill="#c0c0c0"/></svg>
<svg style="left:57px;top:8px" width="5" height="8" viewBox="0 0 5 8" ><path d="M0 0V8L5 4Z" fill="#c0c0c0"/></svg>
<div class="a" style="left:101px;top:-1px;width:74px;height:24px;background:#fff;border-bottom:2px solid #217346;border-left:1px solid #c6c6c6;border-right:1px solid #c6c6c6"></div>
<svg class="tx" style="left:115px;top:2px" width="44" height="21"><text x="0" y="15" font-size="13" fill="#217346" textLength="44" lengthAdjust="spacingAndGlyphs">Sheet2</text></svg>
<svg class="tx" style="left:188px;top:2px" width="44" height="21"><text x="0" y="15" font-size="13" fill="#444" textLength="44" lengthAdjust="spacingAndGlyphs">Sheet1</text></svg>
<div class="a" style="left:246px;top:4px;width:1px;height:18px;background:#ababab"></div>
<div class="a" style="left:280px;top:6px;width:15px;height:15px;border-radius:8px;border:1.4px solid #6a6a6a"></div>
<svg style="left:283px;top:9px" width="9" height="9" viewBox="0 0 9 9" ><path d="M0 4.5H9M4.5 0V9" stroke="#666" stroke-width="1.1"/></svg>
<div class="a" style="left:655px;top:6px;width:2px;height:2px;background:#b0b0b0"></div>
<div class="a" style="left:655px;top:11px;width:2px;height:2px;background:#b0b0b0"></div>
<div class="a" style="left:655px;top:16px;width:2px;height:2px;background:#b0b0b0"></div>
<div class="a" style="left:673px;top:6px;width:398px;height:15px;background:#d4d4d4"></div>
<div class="a" style="left:673px;top:6px;width:14px;height:15px;background:#fff;border:1px solid #b4b4b4"></div>
<svg style="left:678px;top:10px" width="4" height="7" viewBox="0 0 4 7" ><path d="M4 0V7L0 3.5Z" fill="#777"/></svg>
<div class="a" style="left:686px;top:6px;width:111px;height:15px;background:#fff;border:1px solid #b4b4b4"></div>
<div class="a" style="left:1056px;top:6px;width:15px;height:15px;background:#fff;border:1px solid #b4b4b4"></div>
<svg style="left:1062px;top:10px" width="4" height="7" viewBox="0 0 4 7" ><path d="M0 0V7L4 3.5Z" fill="#777"/></svg>
</div>
<div id="status" class="a" style="left:0;top:825px;width:1093px;height:22px;background:#f3f2f1;border-top:1px solid #c8c6c4">
<svg style="left:9px;top:4px" width="15" height="14" viewBox="0 0 15 14" ><rect x=".7" y=".7" width="12.8" height="11" fill="none" stroke="#3b3b3b" stroke-width="1.2"/><path d="M.7 2.8H13.5" stroke="#3b3b3b" stroke-width="1.2"/><path d="M2.5 4.7H5M2.5 6.7H4.5M2.5 8.7H4.5" stroke="#3b3b3b" stroke-width="1"/><circle cx="9.3" cy="8.6" r="4" fill="#f3f2f1" stroke="#3b3b3b" stroke-width="1.2"/><rect x="8" y="7.3" width="2.6" height="2.6" fill="#3b3b3b"/></svg>
<div class="a" style="left:775px;top:0px;width:40px;height:21px;background:#cfcfcf"></div>
<svg style="left:788px;top:3px" width="14" height="13" viewBox="0 0 14 13" ><rect x=".7" y=".7" width="12.6" height="11.6" fill="none" stroke="#505050" stroke-width="1.4"/><path d="M.6 4.6H13.4M.6 8.4H13.4M4.7 .6V12.4M9.3 .6V12.4" stroke="#505050" stroke-width="1.3"/></svg>
<svg style="left:828px;top:3px" width="14" height="13" viewBox="0 0 14 13" ><rect x=".7" y=".7" width="12.6" height="11.6" fill="none" stroke="#505050" stroke-width="1.4"/><rect x="3.6" y="2.9" width="6.8" height="7.2" fill="none" stroke="#505050" stroke-width="1"/><path d="M5 4.8H9M5 6.5H9M5 8.2H9" stroke="#505050" stroke-width=".8"/></svg>
<svg style="left:868px;top:3px" width="14" height="13" viewBox="0 0 14 13" ><rect x=".7" y=".7" width="12.6" height="11.6" fill="none" stroke="#505050" stroke-width="1.4"/><path d="M7 .7V7.2M.7 7.2H10.8V.7" fill="none" stroke="#505050" stroke-width="1.2"/></svg>
<div class="a" style="left:901px;top:9px;width:8px;height:1.5px;background:#444"></div>
<div class="a" style="left:914px;top:9px;width:100px;height:1px;background:#8a8a8a"></div>
<div class="a" style="left:962px;top:3px;width:4px;height:13px;background:#666"></div>
<svg style="left:1018px;top:5px" width="9" height="9" viewBox="0 0 9 9" ><path d="M0 4.5H9M4.5 0V9" stroke="#444" stroke-width="1.1"/></svg>
<svg class="tx" style="left:1041px;top:0px" width="31" height="20"><text x="0" y="14" font-size="12" fill="#444" textLength="31" lengthAdjust="spacingAndGlyphs">100%</text></svg>
</div>
<div id="frame-l" class="a"></div><div id="frame-l2" class="a"></div><div id="frame-r" class="a"></div><div id="frame-b" class="a"></div>
</body>
</html>
